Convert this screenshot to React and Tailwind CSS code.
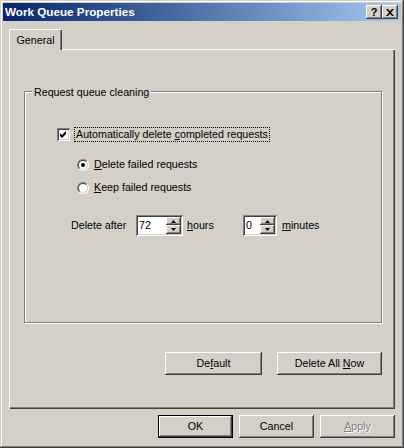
import React from 'react';

const FONT = { fontFamily: '"Liberation Sans", Arial, sans-serif' };

// classic 3D edges
const raised = 'shadow-[inset_-1px_-1px_#404040,inset_1px_1px_#ffffff,inset_-2px_-2px_#808080,inset_2px_2px_#d4d0c8]';
const sunken = 'shadow-[inset_1px_1px_#808080,inset_-1px_-1px_#ffffff,inset_2px_2px_#404040,inset_-2px_-2px_#d4d0c8]';

const PushButton = ({ children, className = '', isDefault = false, disabled = false }) => (
  <div className={`h-[23px] flex items-center justify-center bg-[#d4d0c8] ${isDefault ? 'border border-black' : ''} ${className}`}>
    <div className={`w-full h-full flex items-center justify-center ${raised} ${disabled ? 'text-[#808080] [text-shadow:1px_1px_0_#ffffff]' : 'text-black'}`}>
      <span>{children}</span>
    </div>
  </div>
);

const CaptionButton = ({ children }) => (
  <div className={`w-[16px] h-[14px] bg-[#d4d0c8] ${raised} flex items-center justify-center`}>
    {children}
  </div>
);

const Radio = ({ checked }) => (
  <div className="w-[12px] h-[12px] rounded-full border border-t-[#808080] border-l-[#808080] border-b-white border-r-white">
    <div className="w-full h-full rounded-full bg-white border border-t-[#404040] border-l-[#404040] border-b-[#d4d0c8] border-r-[#d4d0c8] flex items-center justify-center">
      {checked && <div className="w-[4px] h-[4px] rounded-full bg-black" />}
    </div>
  </div>
);

const SpinEdit = ({ value, width }) => (
  <div className={`${width} h-[21px] bg-white ${sunken} flex p-[2px]`}>
    <div className="flex-1 pl-[1px] leading-[17px]">{value}</div>
    <div className="w-[15px] flex flex-col">
      <div className={`h-[8px] bg-[#d4d0c8] ${raised} flex items-center justify-center`}>
        <svg width="5" height="3" viewBox="0 0 5 3"><path d="M2.5 0 L5 3 L0 3 Z" fill="#000" /></svg>
      </div>
      <div className={`h-[9px] bg-[#d4d0c8] ${raised} flex items-center justify-center`}>
        <svg width="5" height="3" viewBox="0 0 5 3"><path d="M0 0 L5 0 L2.5 3 Z" fill="#000" /></svg>
      </div>
    </div>
  </div>
);

export default function App() {
  return (
    <div
      style={FONT}
      className="w-[404px] h-[448px] flex flex-col p-[3px] bg-[#d4d0c8] text-[10.7px] text-black shadow-[inset_-1px_-1px_#404040,inset_1px_1px_#d4d0c8,inset_-2px_-2px_#808080,inset_2px_2px_#ffffff]"
    >
      {/* TITLE BAR */}
      <div className="h-[18px] flex items-center justify-between pl-[2px] pr-[3px] bg-linear-to-r from-[#0a246a] to-[#a6caf0]">
        <span className="text-white font-bold text-[11.7px]">Work Queue Properties</span>
        <div className="flex">
          <CaptionButton>
            <span className="font-bold text-[11px] leading-none">?</span>
          </CaptionButton>
          <CaptionButton>
            <svg width="8" height="7" viewBox="0 0 8 7">
              <path d="M0 0 L2 0 L4 2.2 L6 0 L8 0 L5 3.5 L8 7 L6 7 L4 4.8 L2 7 L0 7 L3 3.5 Z" fill="#000" />
            </svg>
          </CaptionButton>
        </div>
      </div>

      {/* CONTENT */}
      <div className="flex flex-col px-[6px] pt-[8px]">
        {/* TAB */}
        <div className="relative z-10 -mb-[1px] w-[53px] h-[21px] bg-[#d4d0c8] border-t border-l border-white border-r border-r-[#404040] rounded-tl-[2px] rounded-tr-[2px] shadow-[inset_-1px_0_#808080] flex items-start justify-center pt-[2px]">
          General
        </div>

        {/* TAB PAGE */}
        <div className="w-[386px] h-[360px] border-t border-l border-white shadow-[inset_-1px_-1px_#404040,inset_-2px_-2px_#808080] pl-[14px] pr-[13px] pt-[41px] flex flex-col">
          {/* GROUP BOX */}
          <div className="relative h-[232px] border border-[#808080] shadow-[1px_1px_0_#ffffff,inset_1px_1px_0_#ffffff] flex flex-col">
            <span className="absolute left-[7px] -top-[8px] px-[2px] bg-[#d4d0c8]">Request queue cleaning</span>

            <div className="mt-[35px] ml-[32px] h-[15px] flex items-center">
              <div className={`w-[13px] h-[13px] bg-white ${sunken} flex items-center justify-center`}>
                <svg width="7" height="7" viewBox="0 0 7 7">
                  <path d="M0 2 L2 4 L6 0 L6 3 L2 7 L0 5 Z" fill="#000" />
                </svg>
              </div>
              <div className="ml-[4px] h-[15px] px-[1px] border border-dotted border-black flex items-center">
                <span>Automatically delete <u>c</u>ompleted requests</span>
              </div>
            </div>

            <div className="mt-[15px] ml-[52px] h-[15px] flex items-center gap-[5px]">
              <Radio checked />
              <span><u>D</u>elete failed requests</span>
            </div>
            <div className="mt-[8px] ml-[52px] h-[15px] flex items-center gap-[5px]">
              <Radio />
              <span><u>K</u>eep failed requests</span>
            </div>

            <div className="mt-[20px] ml-[46px] flex items-center">
              <span className="w-[65px]">Delete after</span>
              <SpinEdit value="72" width="w-[47px]" />
              <span className="ml-[4px] w-[56px]"><u>h</u>ours</span>
              <SpinEdit value="0" width="w-[34px]" />
              <span className="ml-[5px]"><u>m</u>inutes</span>
            </div>
          </div>

          <div className="mt-[29px] flex justify-end gap-[15px]">
            <PushButton className="w-[97px]">De<u>f</u>ault</PushButton>
            <PushButton className="w-[105px]">Delete All <u>N</u>ow</PushButton>
          </div>
        </div>

        {/* DIALOG BUTTONS */}
        <div className="mt-[6px] w-[386px] flex justify-end gap-[6px]">
          <PushButton className="w-[75px]" isDefault>OK</PushButton>
          <PushButton className="w-[75px]">Cancel</PushButton>
          <PushButton className="w-[75px]" disabled><u>A</u>pply</PushButton>
        </div>
      </div>
    </div>
  );
}
